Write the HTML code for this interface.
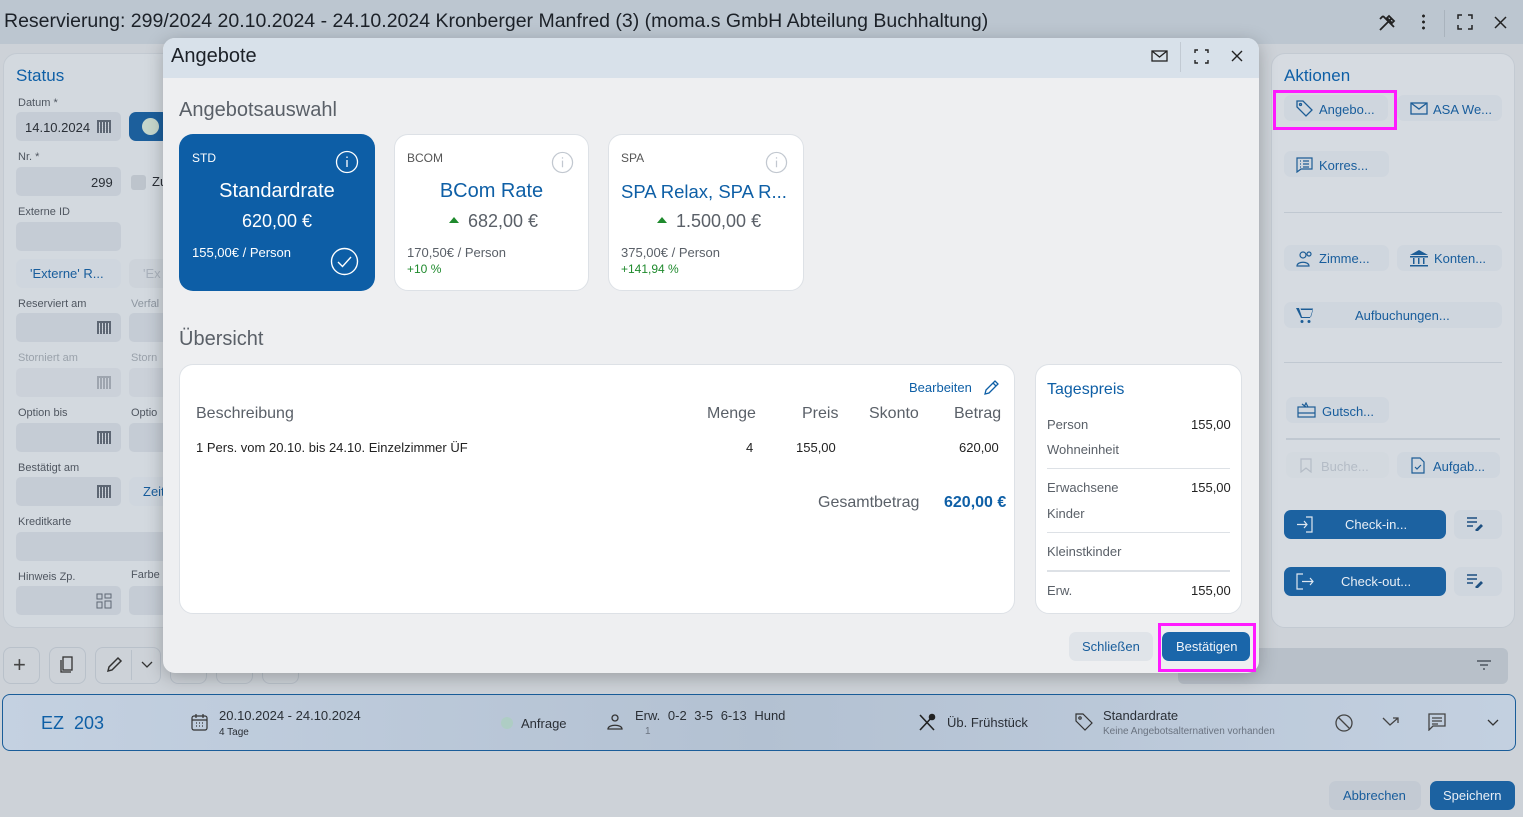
<!DOCTYPE html>
<html><head><meta charset="utf-8">
<style>
*{box-sizing:border-box;margin:0;padding:0}
body{width:1523px;height:817px;overflow:hidden;position:relative;font-family:"Liberation Sans",sans-serif;background:#cdd2d8;color:#2a2f36}
.a{position:absolute}
.t{white-space:nowrap}
.lbl{font-size:11px;color:#4f5660}
.fld{background:#c5ccd5;border-radius:5px}
.cal{position:absolute;width:14px;height:13px;background:linear-gradient(#5d6673 0 2px,transparent 2px),repeating-linear-gradient(90deg,#5d6673 0 2px,transparent 2px 3px),repeating-linear-gradient(0deg,transparent 0 1px,#d0d5dc 1px 2px);background-blend-mode:normal}
.btn{background:#cfd6de;border-radius:7px;color:#185d9c;font-size:13px}
.blue{color:#0e5fa6}
.card{background:#fff;border-radius:14px;border:1px solid #dde1e6}
</style></head><body>
<div class="a" style="left:0;top:0;width:1523px;height:44px;background:#bcc6d0"></div>
<div class="a t" style="left:4px;top:10px;font-size:19.5px;color:#1c2128">Reservierung: 299/2024 20.10.2024 - 24.10.2024 Kronberger Manfred (3) (moma.s GmbH Abteilung Buchhaltung)</div>
<svg class="a" style="left:1377px;top:13px" width="20" height="20" viewBox="0 0 20 20" stroke="#222" stroke-width="1.8" fill="none"><path d="M3 17L14 6M6 3l11 11M12 3l5 5-2 2-5-5z M3 6l3-3"/></svg>
<div class="a" style="left:1422px;top:13px;width:3px;height:17px;background:radial-gradient(circle,#222 1.3px,transparent 1.6px) 0 0/3px 6px"></div>
<div class="a" style="left:1444px;top:10px;width:1px;height:27px;background:#a9b3bd"></div>
<svg class="a" style="left:1457px;top:14px" width="16" height="16" viewBox="0 0 16 16" stroke="#222" stroke-width="1.5" fill="none"><path d="M1 5V1h4M11 1h4v4M15 11v4h-4M5 15H1v-4"/></svg>
<svg class="a" style="left:1494px;top:16px" width="13" height="13" viewBox="0 0 13 13" stroke="#222" stroke-width="1.5"><path d="M1 1l11 11M12 1L1 12"/></svg>

<div class="a" style="left:3px;top:53px;width:200px;height:575px;background:#d3d9df;border-radius:14px;border:1px solid #c3cad2"></div>
<div class="a t blue" style="left:16px;top:66px;font-size:17px">Status</div>
<div class="a t lbl" style="left:18px;top:97px">Datum *</div>
<div class="a fld" style="left:16px;top:112px;width:105px;height:29px"></div>
<div class="a t" style="left:25px;top:120px;font-size:13px">14.10.2024</div>
<div class="cal" style="left:97px;top:120px"></div>
<div class="a" style="left:129px;top:112px;width:40px;height:29px;background:#1c5f9c;border-radius:7px"></div>
<div class="a" style="left:142px;top:118px;width:17px;height:17px;background:#c6d7cc;border-radius:50%"></div>
<div class="a t lbl" style="left:18px;top:151px">Nr. *</div>
<div class="a fld" style="left:16px;top:167px;width:105px;height:29px"></div>
<div class="a t" style="left:91px;top:175px;font-size:13px">299</div>
<div class="a" style="left:131px;top:175px;width:15px;height:15px;background:#bdc4cc;border-radius:3px"></div>
<div class="a t" style="left:152px;top:174px;font-size:13px">Zu</div>
<div class="a t lbl" style="left:18px;top:206px">Externe ID</div>
<div class="a fld" style="left:16px;top:222px;width:105px;height:29px"></div>
<div class="a btn" style="left:16px;top:259px;width:105px;height:29px"></div>
<div class="a t" style="left:30px;top:266px;font-size:13px;color:#185d9c">'Externe' R...</div>
<div class="a btn" style="left:129px;top:259px;width:40px;height:29px;background:#cdd3da"></div>
<div class="a t" style="left:143px;top:266px;font-size:13px;color:#aab2bc">'Ex</div>
<div class="a t lbl" style="left:18px;top:298px">Reserviert am</div><div class="a t lbl" style="left:131px;top:298px;color:#8d96a0">Verfal</div>
<div class="a fld" style="left:16px;top:313px;width:105px;height:29px"></div><div class="cal" style="left:97px;top:321px"></div>
<div class="a fld" style="left:129px;top:313px;width:40px;height:29px"></div>
<div class="a t lbl" style="left:18px;top:352px;color:#9aa2ab">Storniert am</div><div class="a t lbl" style="left:131px;top:352px;color:#9aa2ab">Storn</div>
<div class="a fld" style="left:16px;top:368px;width:105px;height:29px;background:#cbd1d9"></div><div class="cal" style="left:97px;top:376px;opacity:.4"></div>
<div class="a fld" style="left:129px;top:368px;width:40px;height:29px;background:#cbd1d9"></div>
<div class="a t lbl" style="left:18px;top:407px">Option bis</div><div class="a t lbl" style="left:131px;top:407px">Optio</div>
<div class="a fld" style="left:16px;top:423px;width:105px;height:29px"></div><div class="cal" style="left:97px;top:431px"></div>
<div class="a fld" style="left:129px;top:423px;width:40px;height:29px"></div>
<div class="a t lbl" style="left:18px;top:462px">Bestätigt am</div>
<div class="a fld" style="left:16px;top:477px;width:105px;height:29px"></div><div class="cal" style="left:97px;top:485px"></div>
<div class="a btn" style="left:129px;top:477px;width:40px;height:29px"></div>
<div class="a t" style="left:143px;top:484px;font-size:13px;color:#185d9c">Zeit</div>
<div class="a t lbl" style="left:18px;top:516px">Kreditkarte</div>
<div class="a fld" style="left:16px;top:532px;width:160px;height:29px"></div>
<div class="a t lbl" style="left:18px;top:571px">Hinweis Zp.</div><div class="a t lbl" style="left:131px;top:569px">Farbe</div>
<div class="a fld" style="left:16px;top:586px;width:105px;height:29px"></div>
<svg class="a" style="left:96px;top:593px" width="16" height="16" viewBox="0 0 16 16" stroke="#5d6673" fill="none"><rect x="1" y="1" width="5" height="5"/><rect x="9" y="1" width="6" height="4"/><rect x="1" y="9" width="5" height="6"/><rect x="9" y="8" width="6" height="7"/></svg>
<div class="a fld" style="left:129px;top:586px;width:40px;height:29px"></div>
<div class="a" style="left:3px;top:647px;width:37px;height:37px;border:1px solid #b9c1ca;border-radius:8px"></div>
<div class="a t" style="left:13px;top:652px;font-size:22px;color:#444">+</div>
<div class="a" style="left:49px;top:647px;width:37px;height:37px;border:1px solid #b9c1ca;border-radius:8px"></div>
<svg class="a" style="left:59px;top:656px" width="16" height="18" viewBox="0 0 16 18" stroke="#333" fill="none" stroke-width="1.3"><rect x="4" y="1" width="9" height="13"/><path d="M2 4v12h10"/></svg>
<div class="a" style="left:95px;top:647px;width:66px;height:37px;border:1px solid #b9c1ca;border-radius:8px"></div>
<div class="a" style="left:131px;top:650px;width:1px;height:30px;background:#b9c1ca"></div>
<svg class="a" style="left:105px;top:656px" width="18" height="18" viewBox="0 0 18 18" stroke="#333" fill="none" stroke-width="1.5"><path d="M3 15l1-4 9-9 3 3-9 9z"/></svg>
<svg class="a" style="left:141px;top:661px" width="12" height="8" viewBox="0 0 12 8" stroke="#333" fill="none" stroke-width="1.3"><path d="M1 1l5 5 5-5"/></svg>
<div class="a" style="left:170px;top:650px;width:37px;height:34px;border:1px solid #b9c1ca;border-radius:8px"></div>
<div class="a" style="left:216px;top:650px;width:37px;height:34px;border:1px solid #b9c1ca;border-radius:8px"></div>
<div class="a" style="left:262px;top:650px;width:37px;height:34px;border:1px solid #b9c1ca;border-radius:8px"></div>
<div class="a" style="left:1178px;top:648px;width:330px;height:36px;background:#b8c0c9;border-radius:6px"></div>
<svg class="a" style="left:1476px;top:658px" width="16" height="14" viewBox="0 0 16 14" stroke="#4d5560" stroke-width="1.5"><path d="M1 3h14M4 7h8M7 11h2"/></svg>

<div class="a" style="left:2px;top:694px;width:1514px;height:57px;border:1px solid #1a5d99;border-radius:8px;background:linear-gradient(90deg,#c4d1e1,#b3c1d2 50%,#c3d0e0)"></div>
<div class="a t blue" style="left:41px;top:713px;font-size:18px">EZ&nbsp; 203</div>
<svg class="a" style="left:191px;top:713px" width="17" height="18" viewBox="0 0 17 18" stroke="#333" fill="none" stroke-width="1.2"><rect x="1" y="3" width="15" height="14" rx="2"/><path d="M1 7h15M5 1v4M12 1v4M5 10h1M8 10h1M11 10h1M5 13h1M8 13h1M11 13h1"/></svg>
<div class="a t" style="left:219px;top:708px;font-size:13px">20.10.2024 - 24.10.2024</div>
<div class="a t" style="left:219px;top:727px;font-size:10px">4 Tage</div>
<div class="a" style="left:501px;top:717px;width:12px;height:12px;border-radius:50%;background:#aecdc4"></div>
<div class="a t" style="left:521px;top:716px;font-size:13px">Anfrage</div>
<svg class="a" style="left:606px;top:713px" width="20" height="18" viewBox="0 0 20 18" stroke="#333" fill="none" stroke-width="1.3"><circle cx="9" cy="5" r="3"/><path d="M2 16c0-5 14-5 14 0z"/></svg>
<div class="a t" style="left:635px;top:708px;font-size:13px;word-spacing:4px">Erw. 0-2 3-5 6-13 Hund</div>
<div class="a t" style="left:645px;top:726px;font-size:10px;color:#6a7380">1</div>
<svg class="a" style="left:918px;top:713px" width="18" height="18" viewBox="0 0 18 18" stroke="#222" fill="none" stroke-width="1.6"><path d="M2 2l14 15M16 2L2 17"/><circle cx="14" cy="4" r="2.5" fill="#222"/></svg>
<div class="a t" style="left:947px;top:715px;font-size:13px">Üb. Frühstück</div>
<svg class="a" style="left:1074px;top:712px" width="20" height="20" viewBox="0 0 20 20" stroke="#333" fill="none" stroke-width="1.2"><path d="M2 2h7l9 9-7 7-9-9z"/><circle cx="6" cy="6" r="1.2"/></svg>
<div class="a t" style="left:1103px;top:708px;font-size:13px">Standardrate</div>
<div class="a t" style="left:1103px;top:726px;font-size:10px;color:#6a7380">Keine Angebotsalternativen vorhanden</div>
<svg class="a" style="left:1334px;top:713px" width="20" height="20" viewBox="0 0 20 20" stroke="#444" fill="none" stroke-width="1.3"><circle cx="10" cy="10" r="8"/><path d="M4 4l12 12"/></svg>
<svg class="a" style="left:1382px;top:716px" width="18" height="12" viewBox="0 0 18 12" stroke="#444" fill="none" stroke-width="1.3"><path d="M1 2l7 7 8-7M11 2h5v5"/></svg>
<svg class="a" style="left:1428px;top:713px" width="18" height="18" viewBox="0 0 18 18" stroke="#444" fill="none" stroke-width="1.3"><path d="M1 1h16v12H5l-4 4z M4 5h10M4 8h10M4 11h6"/></svg>
<svg class="a" style="left:1487px;top:719px" width="12" height="8" viewBox="0 0 12 8" stroke="#333" fill="none" stroke-width="1.3"><path d="M1 1l5 5 5-5"/></svg>

<div class="a btn" style="left:1329px;top:781px;width:92px;height:29px;background:#c3cad3"></div>
<div class="a t" style="left:1343px;top:788px;font-size:13px;color:#185d9c">Abbrechen</div>
<div class="a" style="left:1430px;top:781px;width:85px;height:29px;background:#1c62a1;border-radius:7px"></div>
<div class="a t" style="left:1443px;top:788px;font-size:13px;color:#e8eef5">Speichern</div>

<div class="a" style="left:1271px;top:53px;width:244px;height:575px;background:#d6dbe1;border-radius:14px;border:1px solid #c3cad2"></div>
<div class="a t blue" style="left:1284px;top:66px;font-size:17px">Aktionen</div>
<div class="a btn" style="left:1284px;top:95px;width:104px;height:26px"></div>
<div class="a" style="left:1273px;top:90px;width:124px;height:40px;border:3px solid #ff1aff"></div>
<svg class="a" style="left:1296px;top:100px" width="17" height="17" viewBox="0 0 17 17" stroke="#1d5d96" fill="none" stroke-width="1.3"><path d="M1 1h6l9 9-6 6-9-9z"/><circle cx="4.5" cy="4.5" r="1"/></svg>
<div class="a t" style="left:1319px;top:102px;font-size:13px;color:#185d9c">Angebo...</div>
<div class="a btn" style="left:1397px;top:95px;width:105px;height:26px"></div>
<svg class="a" style="left:1410px;top:102px" width="18" height="13" viewBox="0 0 18 13" stroke="#1d5d96" fill="none" stroke-width="1.3"><rect x="1" y="1" width="16" height="11"/><path d="M1 1l8 6 8-6"/></svg>
<div class="a t" style="left:1433px;top:102px;font-size:13px;color:#185d9c">ASA We...</div>
<div class="a btn" style="left:1284px;top:151px;width:105px;height:26px"></div>
<svg class="a" style="left:1296px;top:157px" width="17" height="16" viewBox="0 0 17 16" stroke="#1d5d96" fill="none" stroke-width="1.2"><path d="M1 1h15v11H5l-4 3z M4 4h1M7 4h6M4 7h1M7 7h6M4 10h1M7 10h6"/></svg>
<div class="a t" style="left:1319px;top:158px;font-size:13px;color:#185d9c">Korres...</div>
<div class="a" style="left:1284px;top:212px;width:218px;height:1px;background:#c0c8d1"></div>
<div class="a btn" style="left:1284px;top:245px;width:105px;height:26px"></div>
<svg class="a" style="left:1295px;top:251px" width="20" height="16" viewBox="0 0 20 16" stroke="#1d5d96" fill="none" stroke-width="1.2"><circle cx="8" cy="4" r="3"/><path d="M2 15c0-5 12-5 12 0z"/><circle cx="14" cy="3" r="2"/></svg>
<div class="a t" style="left:1319px;top:251px;font-size:13px;color:#185d9c">Zimme...</div>
<div class="a btn" style="left:1397px;top:245px;width:105px;height:26px"></div>
<svg class="a" style="left:1410px;top:250px" width="18" height="17" viewBox="0 0 18 17" fill="#1d5d96"><path d="M9 0L0 5h18z"/><rect x="0" y="6" width="18" height="1.5"/><rect x="3" y="8" width="1.5" height="6"/><rect x="8" y="8" width="1.5" height="6"/><rect x="13" y="8" width="1.5" height="6"/><rect x="0" y="15" width="18" height="1.5"/></svg>
<div class="a t" style="left:1434px;top:251px;font-size:13px;color:#185d9c">Konten...</div>
<div class="a btn" style="left:1284px;top:302px;width:218px;height:26px"></div>
<svg class="a" style="left:1296px;top:307px" width="17" height="17" viewBox="0 0 17 17" fill="#1d5d96"><path d="M0 1h3l3 9h9l2-7H5l-.5-1.5H17L14 11H5z"/><circle cx="6" cy="14.5" r="1.5"/><circle cx="13" cy="14.5" r="1.5"/></svg>
<div class="a t" style="left:1355px;top:308px;font-size:13px;color:#185d9c">Aufbuchungen...</div>
<div class="a" style="left:1284px;top:362px;width:218px;height:1px;background:#c0c8d1"></div>
<div class="a btn" style="left:1286px;top:397px;width:103px;height:26px"></div>
<svg class="a" style="left:1297px;top:402px" width="19" height="16" viewBox="0 0 19 16" stroke="#1d5d96" fill="none" stroke-width="1.2"><rect x="1" y="5" width="17" height="10"/><path d="M1 11h17M7 5l2-4 2 4M5 2l4 3"/></svg>
<div class="a t" style="left:1322px;top:404px;font-size:13px;color:#185d9c">Gutsch...</div>
<div class="a" style="left:1286px;top:438px;width:214px;height:2px;background:#c0c8d1"></div>
<div class="a btn" style="left:1286px;top:452px;width:103px;height:26px;background:#d3d9df"></div>
<svg class="a" style="left:1300px;top:458px" width="12" height="15" viewBox="0 0 12 15" stroke="#b4bcc6" fill="none" stroke-width="1.2"><path d="M1 1h10v13l-5-4-5 4z"/></svg>
<div class="a t" style="left:1321px;top:459px;font-size:13px;color:#b4bcc6">Buche...</div>
<div class="a btn" style="left:1397px;top:452px;width:103px;height:26px"></div>
<svg class="a" style="left:1411px;top:457px" width="14" height="17" viewBox="0 0 14 17" stroke="#1d5d96" fill="none" stroke-width="1.2"><path d="M1 1h8l4 4v11H1z M4 10l2 2 4-4"/></svg>
<div class="a t" style="left:1433px;top:459px;font-size:13px;color:#185d9c">Aufgab...</div>
<div class="a" style="left:1284px;top:510px;width:162px;height:29px;background:#1c62a1;border-radius:7px"></div>
<svg class="a" style="left:1296px;top:516px" width="18" height="17" viewBox="0 0 18 17" stroke="#dfe7f0" fill="none" stroke-width="1.2"><path d="M10 1h6v15h-6M1 8.5h10M8 5l3 3.5L8 12"/></svg>
<div class="a t" style="left:1345px;top:517px;font-size:13px;color:#e8eef5">Check-in...</div>
<div class="a btn" style="left:1454px;top:510px;width:48px;height:29px"></div>
<svg class="a" style="left:1466px;top:517px" width="17" height="14" viewBox="0 0 17 14" stroke="#1d4f80" fill="none" stroke-width="1.4"><path d="M1 1h10M1 5h10M1 9h6M10 13l5-5 1 1-5 5z"/></svg>
<div class="a" style="left:1284px;top:567px;width:162px;height:29px;background:#1c62a1;border-radius:7px"></div>
<svg class="a" style="left:1296px;top:573px" width="18" height="17" viewBox="0 0 18 17" stroke="#dfe7f0" fill="none" stroke-width="1.2"><path d="M7 1H1v15h6M6 8.5h11M14 5l3 3.5-3 3.5"/></svg>
<div class="a t" style="left:1341px;top:574px;font-size:13px;color:#e8eef5">Check-out...</div>
<div class="a btn" style="left:1454px;top:567px;width:48px;height:29px"></div>
<svg class="a" style="left:1466px;top:574px" width="17" height="14" viewBox="0 0 17 14" stroke="#1d4f80" fill="none" stroke-width="1.4"><path d="M1 1h10M1 5h10M1 9h6M10 13l5-5 1 1-5 5z"/></svg>

<div class="a" style="left:163px;top:38px;width:1096px;height:635px;background:#eeeff1;border-radius:12px;overflow:hidden;box-shadow:0 4px 18px rgba(0,0,0,.25)">
 <div class="a" style="left:0;top:0;width:1096px;height:40px;background:#d8e1ea"></div>
</div>
<div class="a t" style="left:171px;top:45px;font-size:20px;color:#1c2128">Angebote</div>
<svg class="a" style="left:1151px;top:50px" width="17" height="12" viewBox="0 0 17 12" stroke="#222" fill="none" stroke-width="1.3"><rect x="1" y="1" width="15" height="10"/><path d="M1 1l7.5 6L16 1"/></svg>
<div class="a" style="left:1180px;top:42px;width:1px;height:30px;background:#c2cad3"></div>
<svg class="a" style="left:1194px;top:49px" width="15" height="15" viewBox="0 0 15 15" stroke="#222" stroke-width="1.4" fill="none"><path d="M1 4V1h3M11 1h3v3M14 11v3h-3M4 14H1v-3"/></svg>
<svg class="a" style="left:1231px;top:50px" width="12" height="12" viewBox="0 0 12 12" stroke="#222" stroke-width="1.4"><path d="M1 1l10 10M11 1L1 11"/></svg>

<div class="a t" style="left:179px;top:99px;font-size:20px;color:#5a6068">Angebotsauswahl</div>
<div class="a" style="left:179px;top:134px;width:196px;height:157px;background:#0d5ea6;border-radius:14px"></div>
<div class="a t" style="left:192px;top:151px;font-size:12px;color:#fff">STD</div>
<svg class="a" style="left:335px;top:150px" width="24" height="24" viewBox="0 0 24 24" stroke="#fff" fill="none" stroke-width="1.3"><circle cx="12" cy="12" r="10.5"/><path d="M12 10v7M12 6.5v1.5"/></svg>
<div class="a t" style="left:179px;top:180px;width:196px;text-align:center;font-size:20px;color:#fff">Standardrate</div>
<div class="a t" style="left:179px;top:211px;width:196px;text-align:center;font-size:18px;color:#fff">620,00 €</div>
<div class="a t" style="left:192px;top:245px;font-size:13px;color:#fff">155,00€ / Person</div>
<svg class="a" style="left:330px;top:247px" width="29" height="29" viewBox="0 0 29 29" stroke="#fff" fill="none" stroke-width="1.4"><circle cx="14.5" cy="14.5" r="13"/><path d="M8 15l4.5 4.5L21 10"/></svg>

<div class="a card" style="left:394px;top:134px;width:195px;height:157px"></div>
<div class="a t" style="left:407px;top:151px;font-size:12px;color:#555">BCOM</div>
<svg class="a" style="left:551px;top:151px" width="23" height="23" viewBox="0 0 24 24" stroke="#c2c8d0" fill="none" stroke-width="1.3"><circle cx="12" cy="12" r="10.5"/><path d="M12 10v7M12 6.5v1.5"/></svg>
<div class="a t blue" style="left:394px;top:180px;width:195px;text-align:center;font-size:20px">BCom Rate</div>
<div class="a" style="left:449px;top:217px;border:5px solid transparent;border-bottom:6px solid #1f8a2d;border-top:0"></div>
<div class="a t" style="left:468px;top:211px;font-size:18px;color:#5a6068">682,00 €</div>
<div class="a t" style="left:407px;top:245px;font-size:13px;color:#5a6068">170,50€ / Person</div>
<div class="a t" style="left:407px;top:262px;font-size:12px;color:#1f8a2d">+10 %</div>

<div class="a card" style="left:608px;top:134px;width:196px;height:157px"></div>
<div class="a t" style="left:621px;top:151px;font-size:12px;color:#555">SPA</div>
<svg class="a" style="left:765px;top:151px" width="23" height="23" viewBox="0 0 24 24" stroke="#c2c8d0" fill="none" stroke-width="1.3"><circle cx="12" cy="12" r="10.5"/><path d="M12 10v7M12 6.5v1.5"/></svg>
<div class="a t blue" style="left:621px;top:181px;font-size:18.5px">SPA Relax, SPA R...</div>
<div class="a" style="left:657px;top:217px;border:5px solid transparent;border-bottom:6px solid #1f8a2d;border-top:0"></div>
<div class="a t" style="left:676px;top:211px;font-size:18px;color:#5a6068">1.500,00 €</div>
<div class="a t" style="left:621px;top:245px;font-size:13px;color:#5a6068">375,00€ / Person</div>
<div class="a t" style="left:621px;top:262px;font-size:12px;color:#1f8a2d">+141,94 %</div>

<div class="a t" style="left:179px;top:328px;font-size:20px;color:#5a6068">Übersicht</div>
<div class="a card" style="left:179px;top:364px;width:836px;height:250px"></div>
<div class="a t blue" style="left:909px;top:380px;font-size:13px">Bearbeiten</div>
<svg class="a" style="left:983px;top:379px" width="17" height="17" viewBox="0 0 17 17" stroke="#0e5fa6" fill="none" stroke-width="1.3"><path d="M2 15l1-4 9-9 3 3-9 9z M10 4l3 3"/></svg>
<div class="a t" style="left:196px;top:405px;font-size:16px;color:#5a6068">Beschreibung</div>
<div class="a t" style="left:707px;top:405px;font-size:16px;color:#5a6068">Menge</div>
<div class="a t" style="left:802px;top:405px;font-size:16px;color:#5a6068">Preis</div>
<div class="a t" style="left:869px;top:405px;font-size:16px;color:#5a6068">Skonto</div>
<div class="a t" style="left:954px;top:405px;font-size:16px;color:#5a6068">Betrag</div>
<div class="a t" style="left:196px;top:440px;font-size:13px;color:#222">1 Pers. vom 20.10. bis 24.10. Einzelzimmer ÜF</div>
<div class="a t" style="left:746px;top:440px;font-size:13px;color:#222">4</div>
<div class="a t" style="left:796px;top:440px;font-size:13px;color:#222">155,00</div>
<div class="a t" style="left:959px;top:440px;font-size:13px;color:#222">620,00</div>
<div class="a t" style="left:818px;top:494px;font-size:16px;color:#5a6068">Gesamtbetrag</div>
<div class="a t" style="left:944px;top:494px;font-size:16px;font-weight:bold;color:#0e5fa6">620,00 €</div>

<div class="a card" style="left:1035px;top:364px;width:207px;height:250px"></div>
<div class="a t blue" style="left:1047px;top:381px;font-size:16px">Tagespreis</div>
<div class="a t" style="left:1047px;top:417px;font-size:13px;color:#5a6068">Person</div><div class="a t" style="left:1191px;top:417px;font-size:13px;color:#222">155,00</div>
<div class="a t" style="left:1047px;top:442px;font-size:13px;color:#5a6068">Wohneinheit</div>
<div class="a" style="left:1047px;top:468px;width:183px;height:1px;background:#dde1e6"></div>
<div class="a t" style="left:1047px;top:480px;font-size:13px;color:#5a6068">Erwachsene</div><div class="a t" style="left:1191px;top:480px;font-size:13px;color:#222">155,00</div>
<div class="a t" style="left:1047px;top:506px;font-size:13px;color:#5a6068">Kinder</div>
<div class="a" style="left:1047px;top:532px;width:183px;height:1px;background:#dde1e6"></div>
<div class="a t" style="left:1047px;top:544px;font-size:13px;color:#5a6068">Kleinstkinder</div>
<div class="a" style="left:1047px;top:570px;width:183px;height:2px;background:#dde1e6"></div>
<div class="a t" style="left:1047px;top:583px;font-size:13px;color:#5a6068">Erw.</div><div class="a t" style="left:1191px;top:583px;font-size:13px;color:#222">155,00</div>

<div class="a" style="left:1069px;top:632px;width:84px;height:29px;background:#e0e4e9;border-radius:7px"></div>
<div class="a t" style="left:1082px;top:639px;font-size:13px;color:#185d9c">Schließen</div>
<div class="a" style="left:1162px;top:632px;width:88px;height:29px;background:#1a66aa;border-radius:7px"></div>
<div class="a t" style="left:1176px;top:639px;font-size:13px;color:#f0f4f8">Bestätigen</div>
<div class="a" style="left:1158px;top:623px;width:98px;height:49px;border:3px solid #ff1aff"></div>
</body></html>
